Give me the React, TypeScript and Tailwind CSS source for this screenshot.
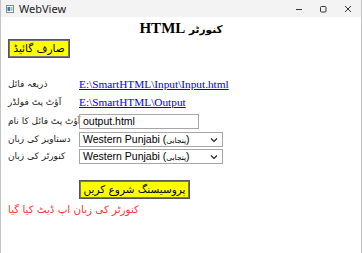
import { useState } from "react";

const urdu = "font-['DejaVu_Sans','Noto_Sans',sans-serif]";

function TitleBar() {
  return (
    <div className="h-[17px] bg-[#f3f3f3] flex items-center justify-between font-['Noto_Sans','Liberation_Sans',sans-serif] text-[11px] text-[#1b1b1b]">
      <div className="flex items-center gap-[5px] pl-[5px]">
        <svg width="8" height="8" viewBox="0 0 8 8">
          <rect x="0.5" y="0.5" width="7" height="7" fill="#fff" stroke="#8a8a8a" />
          <rect x="1.5" y="2" width="2.5" height="4" fill="#2f7fb8" />
          <rect x="4.5" y="2" width="2" height="4" fill="#8cc7a6" />
        </svg>
        <span className="leading-none">WebView</span>
      </div>
      <div className="flex items-center h-full">
        <div className="w-[24px] h-full flex items-center justify-center">
          <svg width="8" height="8" viewBox="0 0 8 8">
            <line x1="1" y1="4.5" x2="7" y2="4.5" stroke="#333" strokeWidth="1" />
          </svg>
        </div>
        <div className="w-[24px] h-full flex items-center justify-center">
          <svg width="8" height="8" viewBox="0 0 8 8">
            <rect x="1.5" y="1.5" width="5.5" height="5.5" rx="1" fill="none" stroke="#333" strokeWidth="1" />
          </svg>
        </div>
        <div className="w-[26px] h-full flex items-center justify-center">
          <svg width="8" height="8" viewBox="0 0 8 8">
            <path d="M1 1 L7 7 M7 1 L1 7" stroke="#333" strokeWidth="1" />
          </svg>
        </div>
      </div>
    </div>
  );
}

function Row({ label, h, children }: { label: string; h: string; children: React.ReactNode }) {
  return (
    <div className={`flex items-center ${h}`}>
      <div className={`w-[71px] shrink-0 ${urdu} text-[9px] text-[#222] whitespace-nowrap flex`}>
        <span dir="rtl">{label}</span>
      </div>
      <div className="flex items-center">{children}</div>
    </div>
  );
}

function LangSelect() {
  return (
    <div className="w-[144px] h-[15px] border border-[#a6a6a6] bg-white text-[10.5px] font-['Liberation_Sans',sans-serif] text-black pl-[3px] pr-[4px] flex items-center justify-between">
      <span className="leading-none whitespace-nowrap">
        Western Punjabi (<span className={`${urdu} text-[7.5px]`}>پنجابی</span>)
      </span>
      <svg width="8" height="6" viewBox="0 0 8 6">
        <path d="M1 1.5 L4 4.5 L7 1.5" fill="none" stroke="#222" strokeWidth="1.2" />
      </svg>
    </div>
  );
}

export default function App() {
  const [name, setName] = useState("output.html");

  return (
    <div className="w-[362px] h-[253px] bg-white flex flex-col overflow-hidden border-x border-[#c4c4c4]">
      <TitleBar />
      <div className="flex-1 px-[7px] font-['Liberation_Serif',serif]">
        <h3 dir="rtl" className="text-center font-bold text-[15px] text-black leading-[17px] mt-[3px]">
          <span className={`${urdu} text-[10.5px]`}>کنورٹر</span> HTML
        </h3>
        <button
          dir="rtl"
          className={`mt-[1px] w-[62px] h-[19px] bg-[#ffff00] border border-[#555] shadow-[inset_0_0_0_1px_#777] ${urdu} text-[10.5px] text-black leading-none flex items-center justify-center whitespace-nowrap`}
        >
          صارف گائیڈ
        </button>

        <div className="mt-[18px]">
          <Row label="ذریعہ فائل" h="h-[18px]">
            <a href="#" className="text-[#0000ee] underline text-[11.3px] leading-none">
              E:\SmartHTML\Input\Input.html
            </a>
          </Row>
          <Row label="آؤٹ پٹ فولڈر" h="h-[18px]">
            <a href="#" className="text-[#0000ee] underline text-[11.3px] leading-none">
              E:\SmartHTML\Output
            </a>
          </Row>
          <Row label="آؤٹ پٹ فائل کا نام" h="h-[19px]">
            <input
              value={name}
              onChange={(e) => setName(e.target.value)}
              className="w-[120px] h-[15px] border border-[#a6a6a6] px-[3px] text-[10.5px] font-['Liberation_Sans',sans-serif] text-black outline-none"
            />
          </Row>
          <Row label="دستاویز کی زبان" h="h-[17px]">
            <LangSelect />
          </Row>
          <Row label="کنورٹر کی زبان" h="h-[17px]">
            <LangSelect />
          </Row>
        </div>

        <div className="pl-[71px] mt-[15px]">
          <button
            dir="rtl"
            className={`w-[111px] h-[19px] bg-[#ffff00] border border-[#555] shadow-[inset_0_0_0_1px_#777] ${urdu} text-[10.5px] text-black leading-none flex items-center justify-center whitespace-nowrap`}
          >
            پروسیسنگ شروع کریں
          </button>
        </div>
        <div className={`mt-[3px] ${urdu} text-[10.3px] text-[#ff3333] leading-[14px] flex`}>
          <span dir="rtl">کنورٹر کی زبان اپ ڈیٹ کیا گیا</span>
        </div>
      </div>
    </div>
  );
}
